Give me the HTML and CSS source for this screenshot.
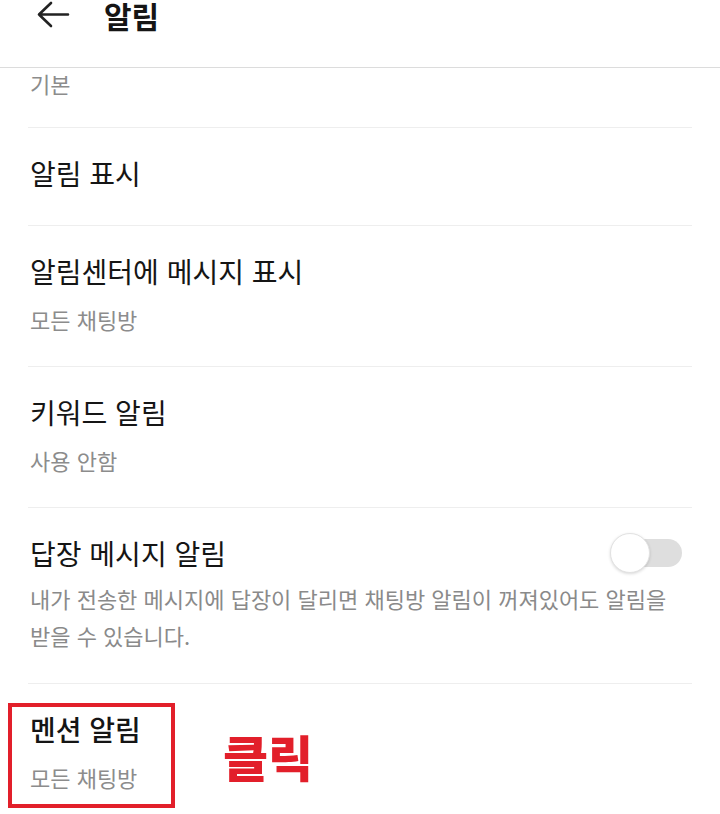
FILE: index.html
```html
<!DOCTYPE html>
<html lang="ko">
<head>
    <meta charset="UTF-8">
    <title>알림</title>
    <link rel="stylesheet" href="styles.css">
</head>
<body>
    <div class="header">
        <svg class="back" width="34" height="28" viewBox="0 0 34 28">
            <path d="M3 13.5 H32 M15 2 L3 13.5 L15 25" fill="none" stroke="#222" stroke-width="2.6" stroke-linecap="round" stroke-linejoin="round"/>
        </svg>
        <h1>알림</h1>
    </div>

    <div class="list">
        <div class="cut">기본</div>

        <div class="row single">
            <div class="title">알림 표시</div>
        </div>

        <div class="row">
            <div class="title">알림센터에 메시지 표시</div>
            <div class="sub">모든 채팅방</div>
        </div>

        <div class="row">
            <div class="title">키워드 알림</div>
            <div class="sub">사용 안함</div>
        </div>

        <div class="row reply">
            <div class="line">
                <div class="title">답장 메시지 알림</div>
                <div class="toggle"><span class="knob"></span></div>
            </div>
            <div class="desc">내가 전송한 메시지에 답장이 달리면 채팅방 알림이 꺼져있어도 알림을 받을 수 있습니다.</div>
        </div>

        <div class="row mention">
            <div class="title">멘션 알림</div>
            <div class="sub">모든 채팅방</div>
            <div class="mark"></div>
            <div class="click">클릭</div>
        </div>
    </div>
</body>
</html>
```

FILE: styles.css
```css
body {
    margin: 0;
    background: #fff;
    font-family: "Noto Sans CJK KR", "Noto Sans", sans-serif;
    color: #151515;
    overflow: hidden;
}
.header {
    height: 68px;
    box-sizing: border-box;
    border-bottom: 1px solid #dcdcdc;
    display: flex;
    align-items: flex-start;
    padding-left: 36px;
}
.back {
    margin-top: 1px;
}
.header h1 {
    margin: -3px 0 0 34px;
    font-size: 30px;
    font-weight: 700;
    line-height: 36px;
}
.list {
    margin: 0 28px;
}
.cut {
    color: #8c8c8c;
    font-size: 22px;
    line-height: 30px;
    padding: 0 0 0 2px;
    height: 59px;
    border-bottom: 1px solid #eeeeee;
}
.row {
    position: relative;
    padding: 28px 0 32px 2px;
    border-bottom: 1px solid #eeeeee;
}
.row.single {
    padding-bottom: 35px;
}
.title {
    font-size: 28px;
    line-height: 34px;
}
.sub {
    margin-top: 16px;
    font-size: 22px;
    line-height: 30px;
    color: #8c8c8c;
}
.line {
    display: flex;
    align-items: center;
    justify-content: space-between;
}
.toggle {
    position: relative;
    width: 61px;
    height: 28px;
    margin-right: 10px;
    border-radius: 14px;
    background: #dedede;
}
.knob {
    position: absolute;
    left: -11px;
    top: -6px;
    width: 40px;
    height: 40px;
    box-sizing: border-box;
    border-radius: 50%;
    background: #fff;
    border: 1px solid #e2e2e2;
    box-shadow: 0 1px 3px rgba(0, 0, 0, 0.15);
}
.reply {
    padding-bottom: 29px;
}
.desc {
    margin-top: 10px;
    font-size: 22px;
    line-height: 37px;
    color: #8a8a8a;
}
.mention {
    border-bottom: none;
}
.mention .title {
    font-weight: 500;
}
.mark {
    position: absolute;
    left: -20px;
    top: 19px;
    width: 159px;
    height: 97px;
    border: 4px solid #e21f2a;
}
.click {
    position: absolute;
    left: 195px;
    top: 42px;
    font-size: 49px;
    font-weight: 900;
    line-height: 60px;
    color: #e21f2a;
}
```
